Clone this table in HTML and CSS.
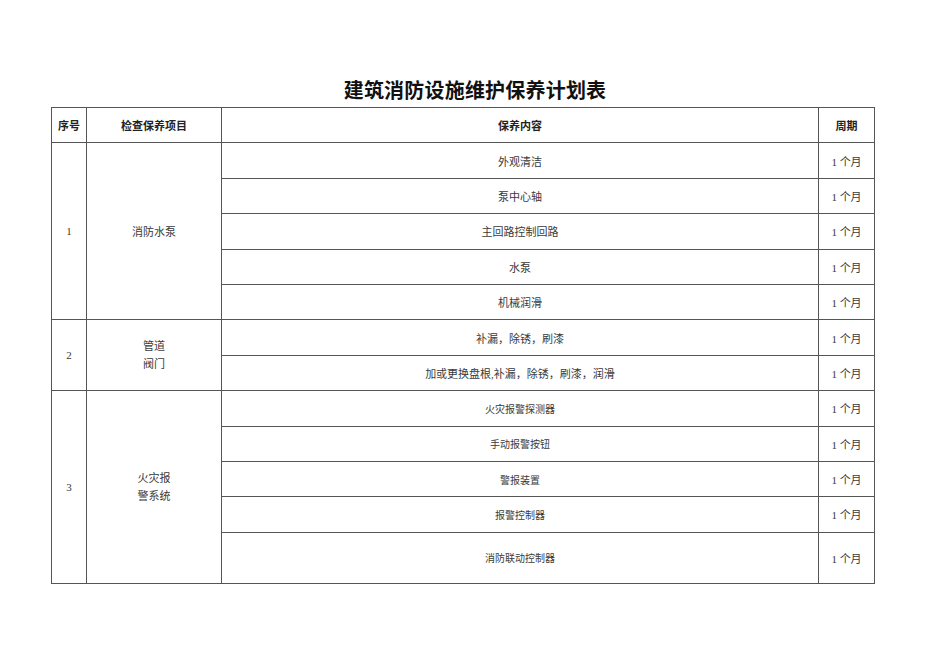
FILE: index.html
```html
<!DOCTYPE html>
<html lang="zh">
<head>
<meta charset="utf-8">
<title>建筑消防设施维护保养计划表</title>
<link rel="stylesheet" href="styles.css">
</head>
<body>
<div class="page">
  <h1 class="title">建筑消防设施维护保养计划表</h1>
  <div class="sheet">
  <table class="plan">
    <colgroup>
      <col class="c-no">
      <col class="c-item">
      <col class="c-content">
      <col class="c-cycle">
    </colgroup>
    <thead>
      <tr class="head">
        <th>序号</th>
        <th>检查保养项目</th>
        <th>保养内容</th>
        <th>周期</th>
      </tr>
    </thead>
    <tbody>
      <tr>
        <td rowspan="5">1</td>
        <td rowspan="5">消防水泵</td>
        <td>外观清洁</td>
        <td>1 个月</td>
      </tr>
      <tr><td>泵中心轴</td><td>1 个月</td></tr>
      <tr><td>主回路控制回路</td><td>1 个月</td></tr>
      <tr><td>水泵</td><td>1 个月</td></tr>
      <tr><td>机械润滑</td><td>1 个月</td></tr>
      <tr>
        <td rowspan="2">2</td>
        <td rowspan="2" class="multi">管道<br>阀门</td>
        <td>补漏，除锈，刷漆</td>
        <td>1 个月</td>
      </tr>
      <tr><td>加或更换盘根,补漏，除锈，刷漆，润滑</td><td>1 个月</td></tr>
      <tr>
        <td rowspan="5">3</td>
        <td rowspan="5" class="multi">火灾报<br>警系统</td>
        <td class="small">火灾报警探测器</td>
        <td>1 个月</td>
      </tr>
      <tr><td class="small">手动报警按钮</td><td>1 个月</td></tr>
      <tr><td class="small">警报装置</td><td>1 个月</td></tr>
      <tr><td class="small">报警控制器</td><td>1 个月</td></tr>
      <tr class="tall"><td class="small">消防联动控制器</td><td>1 个月</td></tr>
    </tbody>
  </table>
  </div>
</div>
</body>
</html>
```
FILE: styles.css
```css
html, body {
  margin: 0;
  padding: 0;
  background: #fff;
}
.page {
  padding-top: 72px;
}
.title {
  margin: 0;
  height: 35px;
  text-align: center;
  font-family: "Noto Sans CJK SC", sans-serif;
  font-weight: 700;
  font-size: 20px;
  line-height: 35px;
  color: #111;
  letter-spacing: 0.2px;
}
.sheet {
  padding-left: 51px;
}
.plan {
  border-collapse: collapse;
  table-layout: fixed;
  width: 823px;
  font-family: "Liberation Serif", "Noto Sans CJK SC", serif;
  font-size: 11px;
  color: #3a3a3a;
}
.c-no { width: 35px; }
.c-item { width: 135px; }
.c-content { width: 597px; }
.c-cycle { width: 56px; }
.plan th,
.plan td {
  border: 1px solid #555;
  padding: 0;
  text-align: center;
  vertical-align: middle;
  height: 34.4px;
}
.plan th {
  font-family: "Noto Sans CJK SC", sans-serif;
  font-weight: 700;
  font-size: 11px;
  color: #222;
}
.plan td.multi {
  line-height: 18px;
}
.plan td.small {
  font-size: 10px;
}
.plan tr.tall td {
  height: 50px;
}
```
